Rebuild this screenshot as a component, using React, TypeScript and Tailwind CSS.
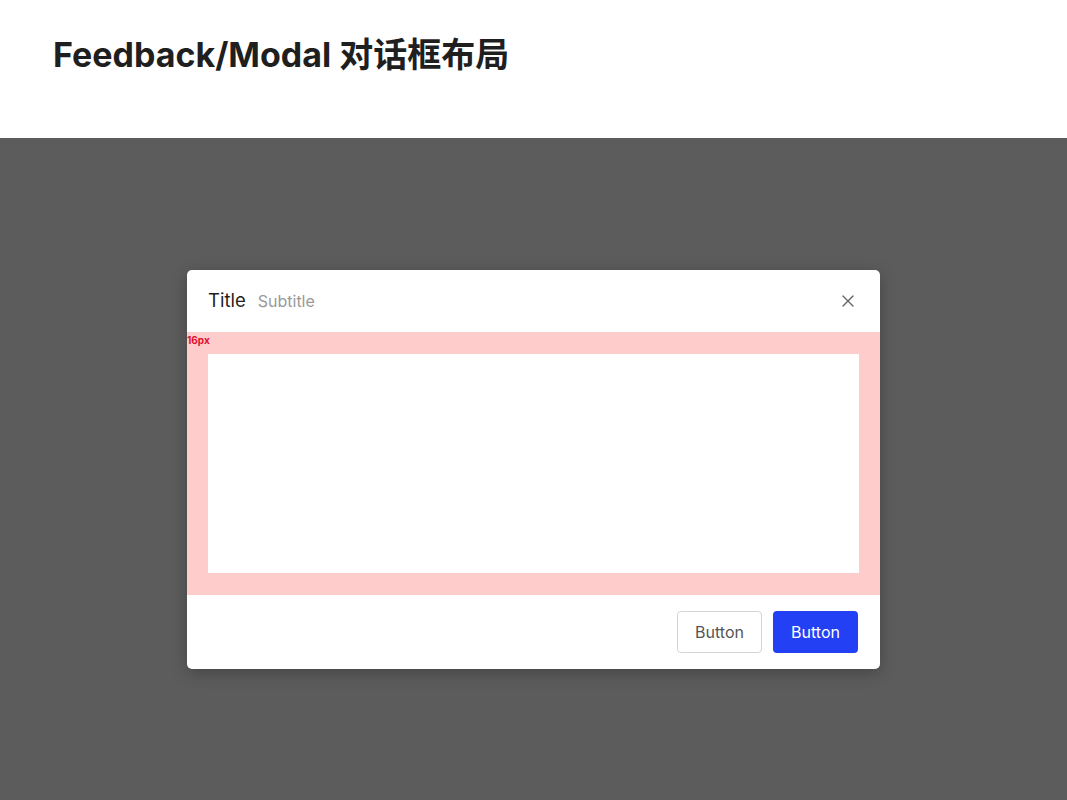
import React from 'react';
import { X } from 'lucide-react';

const sans = { fontFamily: 'Inter, "Noto Sans CJK SC", sans-serif' };

export default function App() {
  return (
    <div className="w-[1067px] h-[800px] flex flex-col bg-white" style={sans}>
      {/* Page header */}
      <div className="h-[138px] shrink-0 px-[53px] pt-[33px]">
        <h1 className="text-[34px] leading-[44px] font-bold text-[#1f1f1f]">
          Feedback/Modal 对话框布局
        </h1>
      </div>

      {/* Overlay area */}
      <div className="flex-1 bg-[#5c5c5c] flex items-center justify-center">
        <div className="w-[693px] bg-white rounded-[5px] shadow-[0_4px_16px_rgba(0,0,0,0.25)] overflow-hidden">
          <div className="h-[62px] flex items-center justify-between pl-[21px] pr-[22px]">
            <div className="flex items-baseline gap-[12px]">
              <span className="text-[18.5px] text-[#1f1f1f]">Title</span>
              <span className="text-[16px] text-[#999999]">Subtitle</span>
            </div>
            <X className="w-[20px] h-[20px] text-[#666666]" strokeWidth={1.6} />
          </div>

          <div className="relative bg-[#ffcccc] px-[21px] py-[22px]">
            <span className="absolute left-0 top-[1px] text-[10px] leading-[14px] font-bold text-[#e0102a]">16px</span>
            <div className="h-[219px] bg-white" />
          </div>

          <div className="h-[74px] flex items-center justify-end gap-[11px] px-[22px]">
            <button className="w-[85px] h-[42px] rounded-[4px] border border-[#d4d4d4] bg-white text-[16px] text-[#555555]">
              Button
            </button>
            <button className="w-[85px] h-[42px] rounded-[4px] bg-[#2340f5] text-[16px] text-white">
              Button
            </button>
          </div>
        </div>
      </div>
    </div>
  );
}
